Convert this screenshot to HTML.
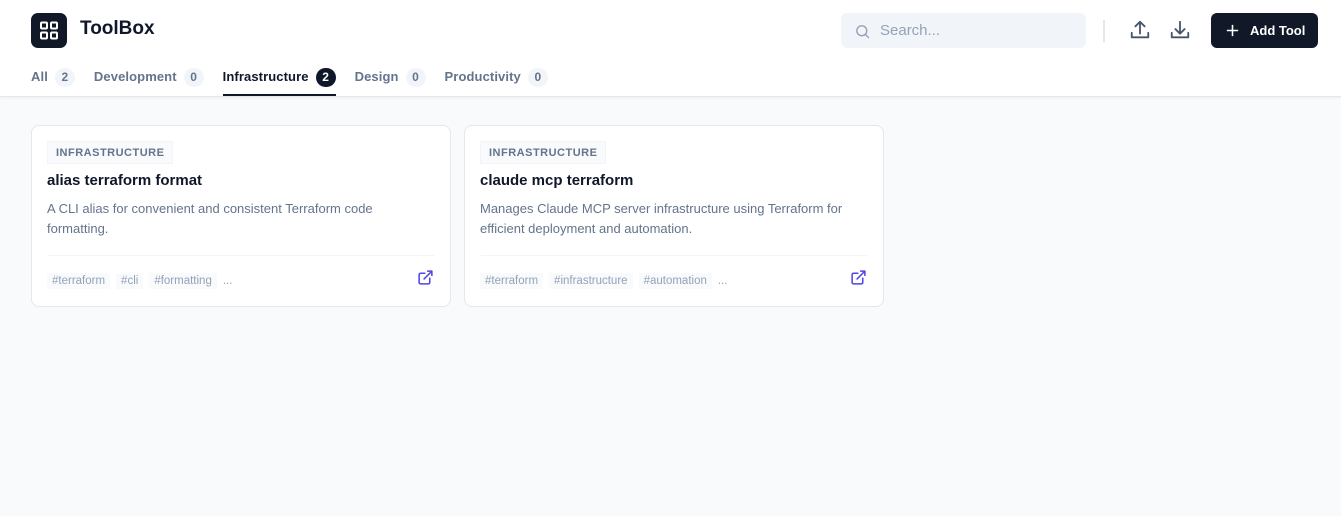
<!DOCTYPE html>
<html><head><style>
*{box-sizing:border-box;margin:0;padding:0}
body{width:1341px;height:516px;background:#f8fafc;font-family:"Liberation Sans",sans-serif;position:relative;overflow:hidden}
.hdr{position:absolute;left:0;top:0;width:1341px;height:97px;background:#fff;border-bottom:1px solid #e2e8f0;box-shadow:0 1px 3px rgba(0,0,0,.05)}
.logo{position:absolute;left:31px;top:13px;width:36px;height:35px;background:#111827;border-radius:7px}
.title{position:absolute;left:80px;top:18px;font-size:19px;font-weight:bold;color:#0f172a}
.tabs{position:absolute;left:31px;top:69px;display:flex;gap:0;font-size:13px;font-weight:bold;color:#64748b}
.tab{display:flex;margin-right:19px;height:27px;align-items:flex-start;letter-spacing:.1px}
.cnt{display:inline-block;margin-left:7px;min-width:20px;height:19px;border-radius:10px;background:#f1f5f9;font-size:12px;text-align:center;line-height:19px;margin-top:-1px}
.tab.act{color:#0f172a;border-bottom:2px solid #0f172a}
.tab.act .cnt{background:#0f172a;color:#fff}
.search{position:absolute;left:841px;top:13px;width:245px;height:35px;background:#f1f5f9;border-radius:6px}
.search span{position:absolute;left:39px;top:9px;font-size:15px;color:#94a3b8}
.sep{position:absolute;left:1103px;top:20px;width:2px;height:22px;background:#e2e8f0}
.btn{position:absolute;left:1211px;top:13px;width:107px;height:35px;background:#111827;border-radius:6px;color:#fff;font-size:13px;font-weight:bold}
.btn span{position:absolute;left:39px;top:10px}
.card{position:absolute;top:125px;width:420px;height:182px;background:#fff;border:1px solid #e2e8f0;border-radius:8px}
.badge{position:absolute;left:15px;top:15px;height:23px;padding:0 8px;background:#f8fafc;border:1px solid #f1f5f9;font-size:11px;font-weight:bold;letter-spacing:.5px;color:#64748b;line-height:22px}
.ct{position:absolute;left:15px;top:46px;font-size:15px;font-weight:bold;color:#0f172a}
.cd{position:absolute;left:15px;top:73px;width:380px;font-size:13px;line-height:20px;color:#64748b}
.tags{position:absolute;left:15px;top:147px;display:flex;gap:6px;font-size:11.5px;color:#94a3b8}
.tags span{background:#f8fafc;padding:2px 5px}
.ext{position:absolute;right:16px;top:143px}
</style></head><body>
<div class="hdr">
<div class="logo"><svg width="36" height="35" viewBox="0 0 36 35"><g fill="none" stroke="#fff" stroke-width="2"><rect x="10" y="9.5" width="6" height="6" rx="1"/><rect x="20" y="9.5" width="6" height="6" rx="1"/><rect x="10" y="19.5" width="6" height="6" rx="1"/><rect x="20" y="19.5" width="6" height="6" rx="1"/></g></svg></div>
<div class="title">ToolBox</div>
<div class="tabs">
<div class="tab">All<span class="cnt">2</span></div>
<div class="tab">Development<span class="cnt">0</span></div>
<div class="tab act">Infrastructure<span class="cnt">2</span></div>
<div class="tab">Design<span class="cnt">0</span></div>
<div class="tab">Productivity<span class="cnt">0</span></div>
</div>
<div class="search"><svg style="position:absolute;left:13px;top:10px" width="17" height="17" viewBox="0 0 24 24" fill="none" stroke="#94a3b8" stroke-width="2"><circle cx="11" cy="11" r="7"/><path d="M21 21l-5-5"/></svg><span>Search...</span></div>
<div class="sep"></div>
<svg style="position:absolute;left:1129px;top:19px" width="22" height="22" viewBox="0 0 24 24" fill="none" stroke="#475569" stroke-width="2" stroke-linecap="round" stroke-linejoin="round"><path d="M3 15v5h18v-5M12 16V3M7 8l5-5 5 5"/></svg>
<svg style="position:absolute;left:1169px;top:19px" width="22" height="22" viewBox="0 0 24 24" fill="none" stroke="#475569" stroke-width="2" stroke-linecap="round" stroke-linejoin="round"><path d="M3 15v5h18v-5M12 3v13M7 11l5 5 5-5"/></svg>
<div class="btn"><svg style="position:absolute;left:14px;top:10px" width="15" height="15" viewBox="0 0 24 24" stroke="#fff" stroke-width="2.5"><path d="M12 3v18M3 12h18"/></svg><span>Add Tool</span></div>
</div>
<div class="card" style="left:31px">
<div class="badge">INFRASTRUCTURE</div>
<div class="ct">alias terraform format</div>
<div class="cd">A CLI alias for convenient and consistent Terraform code formatting.</div>
<div style="position:absolute;left:16px;right:16px;top:129px;border-top:1px solid #f1f5f9"></div>
<div class="tags"><span>#terraform</span><span>#cli</span><span>#formatting</span><span style="background:none;padding:2px 0">...</span></div>
<svg class="ext" width="17" height="17" viewBox="0 0 24 24" fill="none" stroke="#4f46e5" stroke-width="2.2" stroke-linecap="round" stroke-linejoin="round"><path d="M18 13v6a2 2 0 0 1-2 2H5a2 2 0 0 1-2-2V8a2 2 0 0 1 2-2h6M15 3h6v6M10 14L21 3"/></svg>
</div>
<div class="card" style="left:464px">
<div class="badge">INFRASTRUCTURE</div>
<div class="ct">claude mcp terraform</div>
<div class="cd">Manages Claude MCP server infrastructure using Terraform for efficient deployment and automation.</div>
<div style="position:absolute;left:16px;right:16px;top:129px;border-top:1px solid #f1f5f9"></div>
<div class="tags"><span>#terraform</span><span>#infrastructure</span><span>#automation</span><span style="background:none;padding:2px 0">...</span></div>
<svg class="ext" width="17" height="17" viewBox="0 0 24 24" fill="none" stroke="#4f46e5" stroke-width="2.2" stroke-linecap="round" stroke-linejoin="round"><path d="M18 13v6a2 2 0 0 1-2 2H5a2 2 0 0 1-2-2V8a2 2 0 0 1 2-2h6M15 3h6v6M10 14L21 3"/></svg>
</div>
</body></html>
